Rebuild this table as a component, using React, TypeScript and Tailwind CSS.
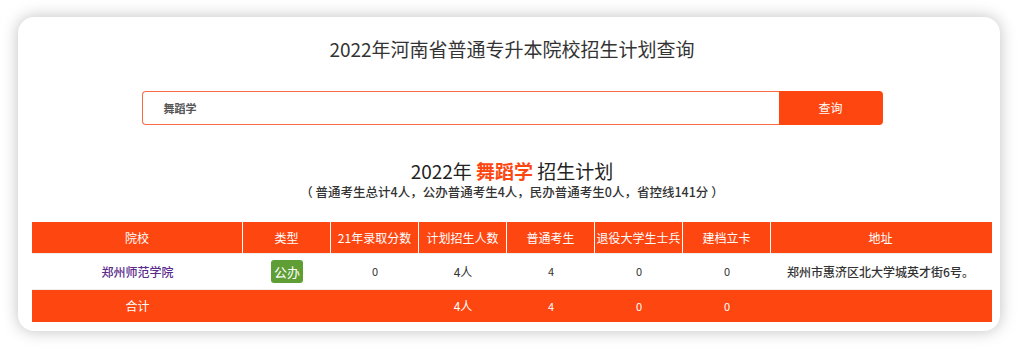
import React from "react";

const F = { fontFamily: '"Noto Sans CJK SC", "Noto Sans", sans-serif' };

const cols = "grid grid-cols-[211px_88px_88px_88px_88px_88px_88px_219px]";

export default function App() {
  const headers = ["院校", "类型", "21年录取分数", "计划招生人数", "普通考生", "退役大学生士兵", "建档立卡", "地址"];
  return (
    <div className="min-h-screen w-[1018px] h-[349px] bg-white pt-[17px] pl-[18px]" style={F}>
      <div className="w-[982px] h-[314px] rounded-[16px] bg-white shadow-[0_0_16px_rgba(0,0,0,0.25)] pl-[14px] pr-[8px] pt-[20px]">
        <div className="text-center text-[19px] leading-[24px] text-[#333]">2022年河南省普通专升本院校招生计划查询</div>
        <div className="mx-auto mt-[30px] flex w-[741px] h-[34px]">
          <div className="flex-1 h-full rounded-l-[4px] border border-r-0 border-[#fb6b43] flex items-center pl-[21px] text-[11px] font-bold text-[#555]">
            舞蹈学
          </div>
          <div className="w-[104px] h-full rounded-r-[4px] bg-[#fe4611] flex items-center justify-center text-white text-[12px]">
            查询
          </div>
        </div>
        <div className="mt-[35px] text-center text-[19px] leading-[22px] text-[#222]">
          2022年 <span className="text-[#fe4611] font-bold">舞蹈学</span> 招生计划
        </div>
        <div className="mt-[2px] text-center text-[12.5px] leading-[16px] text-[#333] font-medium">
          （ 普通考生总计4人，公办普通考生4人，民办普通考生0人，省控线141分 ）
        </div>
        <div className="mt-[22px] text-[12px]">
          <div className={`${cols} h-[31px] bg-[#fe4611] text-white`}>
            {headers.map((h, i) => (
              <div
                key={h}
                className={`flex items-center justify-center ${i < headers.length - 1 ? "border-r border-white" : ""}`}
              >
                {h}
              </div>
            ))}
          </div>
          <div className={`${cols} h-[37px] border-y border-[#eee] text-[#333] text-[11px]`}>
            <div className="flex items-center justify-center text-[12px] font-medium text-[#5a2b8c]">郑州师范学院</div>
            <div className="flex items-center justify-center">
              <span className="rounded-[3px] bg-[#5e9e35] text-white text-[13px] w-[32px] h-[23px] flex items-center justify-center">公办</span>
            </div>
            <div className="flex items-center justify-center">0</div>
            <div className="flex items-center justify-center text-[12px]">4人</div>
            <div className="flex items-center justify-center">4</div>
            <div className="flex items-center justify-center">0</div>
            <div className="flex items-center justify-center">0</div>
            <div className="flex items-center justify-center text-[12px] font-medium">郑州市惠济区北大学城英才街6号。</div>
          </div>
          <div className={`${cols} h-[32px] bg-[#fe4611] text-white text-[11px]`}>
            <div className="flex items-center justify-center text-[12px]">合计</div>
            <div></div>
            <div></div>
            <div className="flex items-center justify-center text-[12px]">4人</div>
            <div className="flex items-center justify-center">4</div>
            <div className="flex items-center justify-center">0</div>
            <div className="flex items-center justify-center">0</div>
            <div></div>
          </div>
        </div>
      </div>
    </div>
  );
}
